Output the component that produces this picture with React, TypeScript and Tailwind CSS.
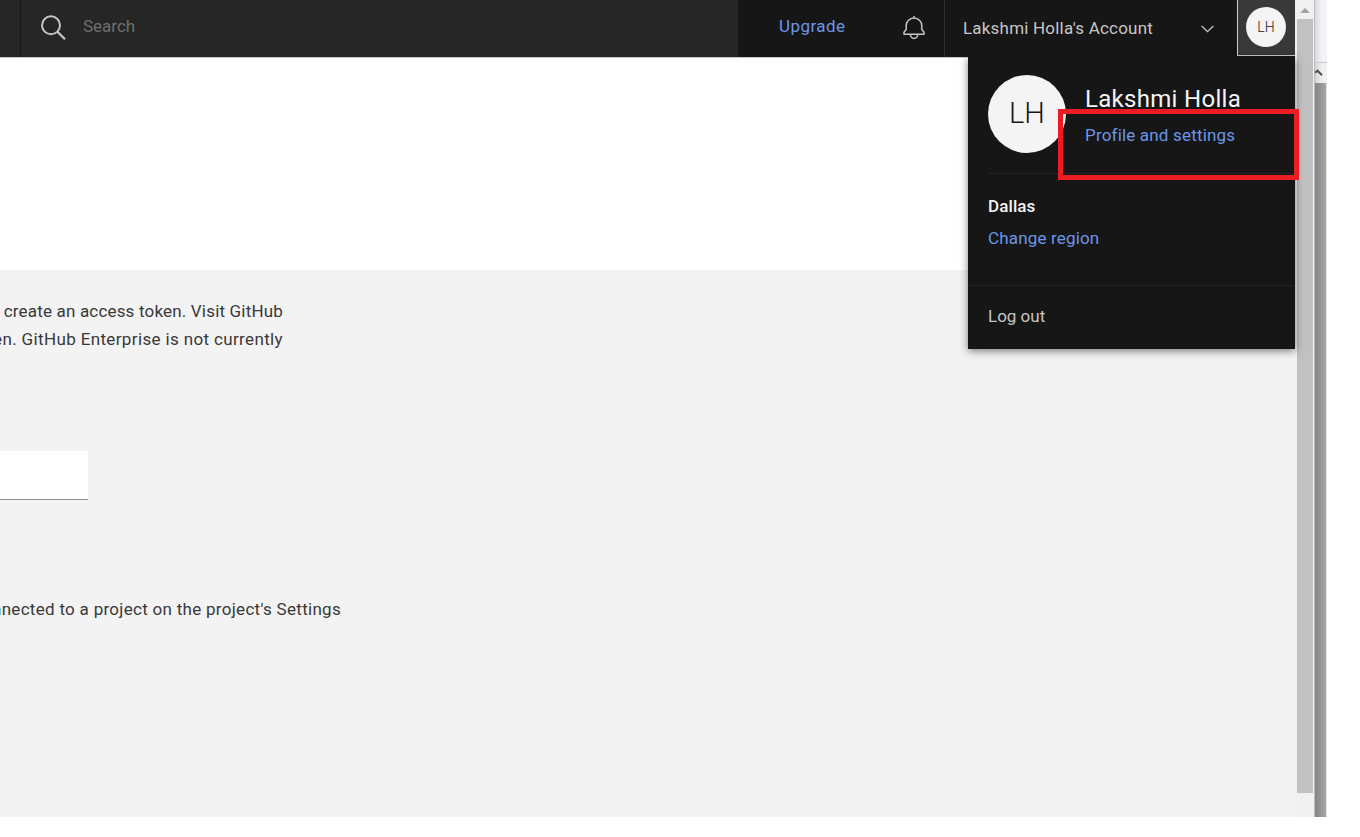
function SearchIcon() {
  return (
    <svg className="-mt-[2px] h-[26px] w-[26px] shrink-0" viewBox="0 0 26 26" fill="none" stroke="#c6c6c6" strokeWidth="2">
      <circle cx="10" cy="10.3" r="9" />
      <path d="M16.4 16.7 24 24.3" strokeWidth="2.3" />
    </svg>
  );
}

function BellIcon() {
  return (
    <svg className="h-[24px] w-[22px] shrink-0" viewBox="0 0 22 24" fill="none" stroke="#c6c6c6" strokeWidth="1.5" strokeLinejoin="round">
      <path d="M11 0V2M1 18.3V16.2L3.2 13.6V9.8A7.8 7.8 0 0 1 18.8 9.8V13.6L21 16.2V18.3Z" />
      <path d="M7.4 18.5A3.6 3.9 0 0 0 14.6 18.5" />
    </svg>
  );
}

function Header() {
  return (
    <header className="flex h-[57px] shrink-0 bg-[#161616] text-[17px]">
      <div className="w-[21px] shrink-0 border-r border-[#161616] bg-[#262626]" />
      <div className="flex w-[717px] shrink-0 items-center bg-[#262626] pl-5">
        <SearchIcon />
        <span className="-mt-[4px] ml-4 text-[#6f6f6f]">Search</span>
      </div>
      <div className="flex w-[206px] shrink-0 items-center pl-[41px]">
        <a className="-mt-[4px] w-[66px] tracking-[0.45px] text-[#6b96e8]">Upgrade</a>
        <span className="-mt-px ml-[58px]"><BellIcon /></span>
      </div>
      <div className="flex w-[293px] shrink-0 items-center border-l border-[#303030] pl-[18px]">
        <span className="w-[190px] whitespace-nowrap tracking-[0.2px] text-[#c6c6c6]">Lakshmi Holla's Account</span>
        <svg className="ml-[48px] h-[8px] w-[13px]" viewBox="0 0 13 8" fill="none" stroke="#c6c6c6" strokeWidth="1.3">
          <path d="M.7 1 6.5 6.7 12.3 1" />
        </svg>
      </div>
      <div className="flex h-[56px] w-[58px] shrink-0 border-b border-l border-[#d0d0d0] bg-[#393939] pl-[8px] pt-[7px]">
        <div className="flex size-[40px] items-center justify-center rounded-full bg-[#f4f4f4] text-[14px] font-light text-[#161616]">LH</div>
      </div>
    </header>
  );
}

function ProfileMenu() {
  return (
    <section className="absolute left-[968px] top-[57px] flex h-[292px] w-[327px] flex-col bg-[#161616] text-[17px] leading-[22px] shadow-[0_2px_8px_rgba(0,0,0,0.5)]">
      <div className="ml-5 flex h-[117px] w-[306px] shrink-0 border-b border-[#232323] pt-[18px]">
        <div className="flex size-[78px] shrink-0 items-center justify-center rounded-full bg-[#f4f4f4] pb-[3px] text-[29px] font-light text-[#161616]">LH</div>
        <div className="ml-[19px] flex flex-col whitespace-nowrap pt-[9px]">
          <h2 className="text-[24px] leading-[30px] tracking-[0.3px] text-[#f4f4f4]">Lakshmi Holla</h2>
          <a className="mt-[10px] tracking-[0.18px] text-[#6b96e8]">Profile and settings</a>
        </div>
      </div>
      <div className="flex h-[112px] shrink-0 flex-col border-b border-[#232323] pl-5 pt-[21px]">
        <strong className="font-medium tracking-[0.1px] text-[#f4f4f4]">Dallas</strong>
        <a className="mt-[10px] tracking-[0.17px] text-[#6b96e8]">Change region</a>
      </div>
      <a className="pl-5 pt-[19px] text-[#c6c6c6]">Log out</a>
    </section>
  );
}

function Content() {
  return (
    <main className="flex flex-1 flex-col border-t border-[#c6c6c6]">
      <div className="h-[212px] shrink-0 bg-white" />
      <div className="flex flex-1 flex-col overflow-hidden bg-[#f3f3f3] text-[17px] leading-[28px] text-[#393939]">
        <div className="mt-[27px] flex w-[283px] flex-col items-end whitespace-nowrap">
          <p className="tracking-[0.18px]">create an access token. Visit GitHub</p>
          <p className="tracking-[0.36px]">en. GitHub Enterprise is not currently</p>
        </div>
        <div className="mt-[98px] h-[49px] w-[88px] border-b border-[#8d8d8d] bg-white" />
        <div className="mt-[95px] flex w-[341px] justify-end whitespace-nowrap tracking-[0.29px]">
          nnected to a project on the project's Settings
        </div>
      </div>
    </main>
  );
}

function Scrollbars() {
  return (
    <>
      <div className="flex w-[19px] shrink-0 flex-col items-center bg-[#f1f1f1]">
        <div className="flex h-[19px] items-center pt-[2px]">
          <svg className="h-[5px] w-[10px]" viewBox="0 0 10 5" fill="#a3a3a3"><path d="M0 5 5 0 10 5Z" /></svg>
        </div>
        <div className="h-[774px] w-[16px] bg-[#c1c1c1]" />
      </div>
      <div className="flex w-[13px] shrink-0 flex-col border-l border-[#bcbcbc]">
        <div className="h-[63px] shrink-0 border-b border-[#c8cacc] bg-linear-to-r from-[#d9dbdd] to-[#f2f4f7] to-60%" />
        <div className="flex h-[20px] shrink-0 items-center bg-linear-to-r from-[#d4d4d4] to-[#f1f1f1] to-60%">
          <svg className="h-[8px] w-[8px]" viewBox="0 0 8 8" fill="none" stroke="#505050" strokeWidth="2"><path d="M0 3.8 2.5 1.7 7 6.2" /></svg>
        </div>
        <div className="flex-1 border-r border-[#e2e2e2] bg-linear-to-r from-[#858585] to-[#a6a6a6]" />
      </div>
    </>
  );
}

export default function App() {
  return (
    <div className="h-[837px] w-[1360px] overflow-hidden bg-white font-['Roboto','Liberation_Sans',sans-serif]">
      <div className="relative flex h-[817px] w-[1327px]">
        <div className="flex w-[1295px] shrink-0 flex-col">
          <Header />
          <Content />
        </div>
        <Scrollbars />
        <ProfileMenu />
        <div className="absolute left-[1058px] top-[109px] h-[71px] w-[241px] border-[5px] border-[#ed1c24]" />
      </div>
    </div>
  );
}
